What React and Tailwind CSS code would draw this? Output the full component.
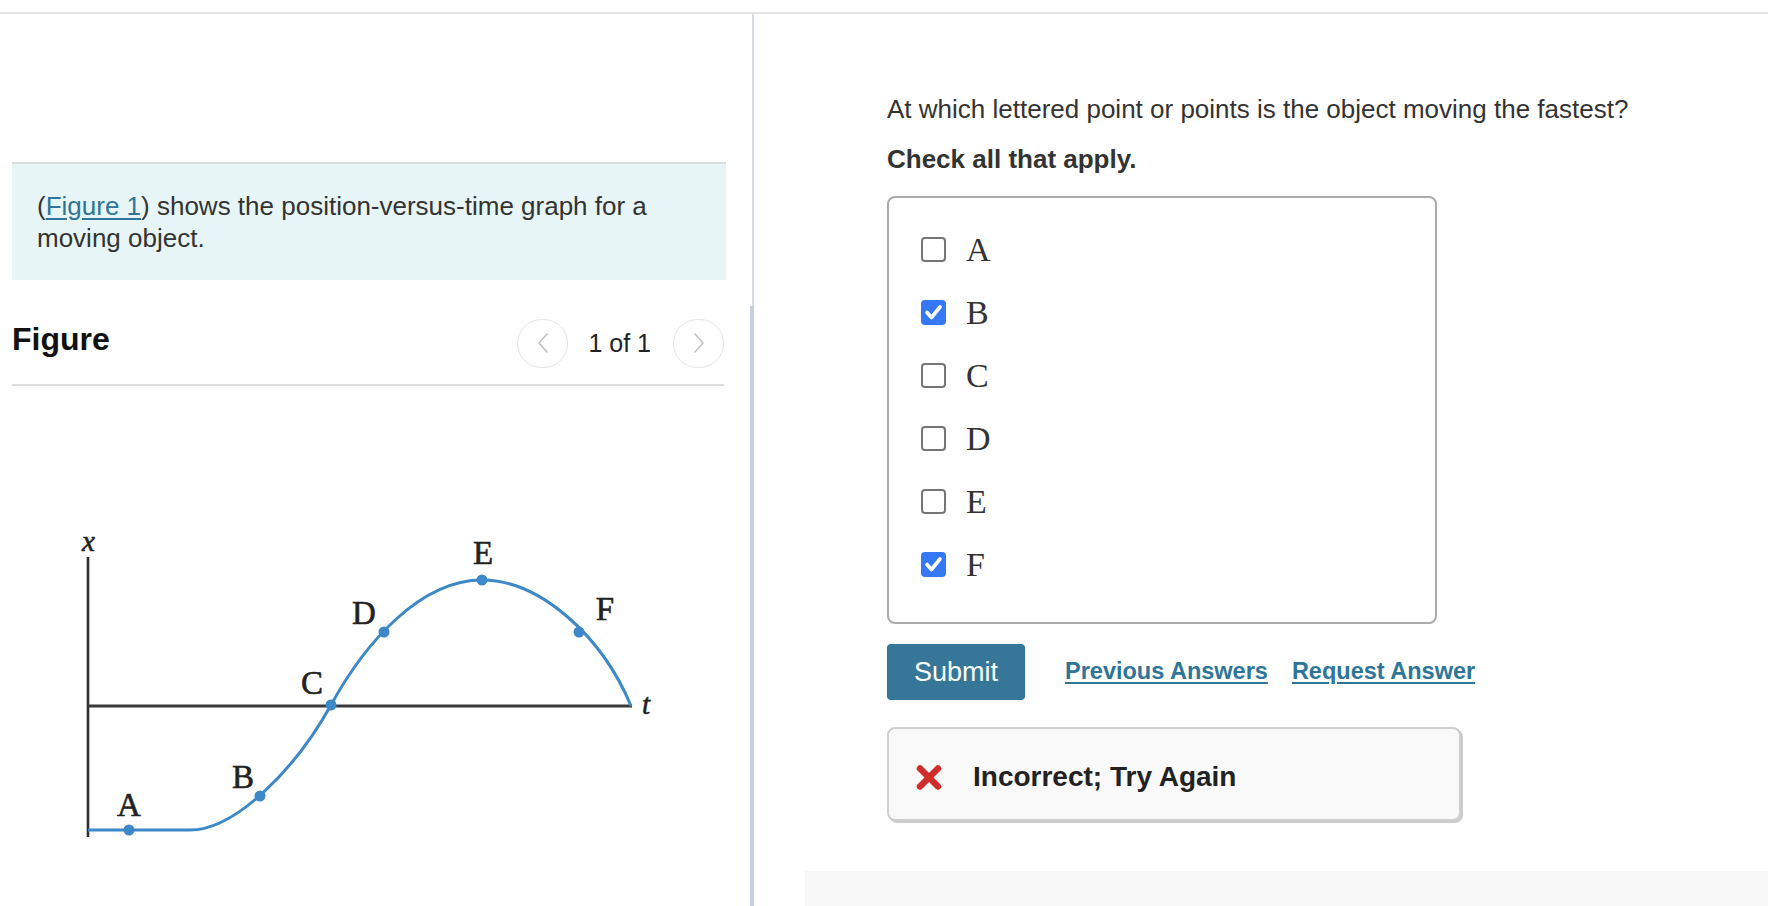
import React from "react";

function Chevron({ dir }) {
  return (
    <svg width="14" height="24" viewBox="0 0 14 24" fill="none">
      {dir === "left" ? (
        <polyline points="11,3 3,12 11,21" stroke="#c2c2c2" strokeWidth="1.6" strokeLinecap="round" strokeLinejoin="round" />
      ) : (
        <polyline points="3,3 11,12 3,21" stroke="#c2c2c2" strokeWidth="1.6" strokeLinecap="round" strokeLinejoin="round" />
      )}
    </svg>
  );
}

function Checkbox({ checked }) {
  if (checked) {
    return (
      <div className="w-[25px] h-[25px] rounded-[4px] bg-[#3478f6] flex items-center justify-center shrink-0">
        <svg width="25" height="25" viewBox="0 0 25 25" fill="none">
          <polyline points="6,12.5 10.5,17.5 19,7" stroke="#ffffff" strokeWidth="3.6" strokeLinecap="round" strokeLinejoin="round" />
        </svg>
      </div>
    );
  }
  return <div className="w-[25px] h-[25px] rounded-[4px] border-2 border-[#767676] bg-white shrink-0" />;
}

function Graph() {
  const serif = "'Liberation Serif', 'Times New Roman', serif";
  const blue = "#3d88c8";
  const pts = [
    [129, 830],
    [260, 796],
    [331, 705],
    [384, 632],
    [482, 580],
    [579, 632],
  ];
  return (
    <svg width="750" height="508" viewBox="0 386 750 508" className="block">
      <line x1="88" y1="557" x2="88" y2="837" stroke="#2f2f2f" strokeWidth="2.6" />
      <line x1="88" y1="706" x2="632" y2="706" stroke="#3a3a3a" strokeWidth="3" />
      <path
        d="M88,830 L190,830 C235,830 295,770 331,705 C365,643 420,580 482,580 C540,580 602,636 631,706"
        fill="none"
        stroke={blue}
        strokeWidth="3"
      />
      {pts.map(([x, y], i) => (
        <circle key={i} cx={x} cy={y} r="5.5" fill={blue} />
      ))}
      <text x="82" y="551" fontFamily={serif} fontStyle="italic" fontSize="29" fill="#222" stroke="#222" strokeWidth="0.6">x</text>
      <text x="642" y="714" fontFamily={serif} fontStyle="italic" fontSize="29" fill="#222" stroke="#222" strokeWidth="0.6">t</text>
      <g fontFamily={serif} fontSize="33" fill="#222" stroke="#222" strokeWidth="0.6" textAnchor="middle">
        <text x="129" y="816">A</text>
        <text x="243" y="788">B</text>
        <text x="312" y="694">C</text>
        <text x="364" y="624">D</text>
        <text x="483" y="564">E</text>
        <text x="605" y="620">F</text>
      </g>
    </svg>
  );
}

export default function App() {
  const options = [
    ["A", false],
    ["B", true],
    ["C", false],
    ["D", false],
    ["E", false],
    ["F", true],
  ];
  return (
    <div className="relative w-[1768px] h-[906px] overflow-hidden bg-white font-['Liberation_Sans',Arial,sans-serif] text-[#333]">
      <div className="h-[12px]" />
      <div className="flex h-[894px] border-t-2 border-[#e2e2e2]">
        {/* Left panel */}
        <div className="w-[750px] shrink-0 flex flex-col">
          <div className="mt-[148px] ml-[12px] w-[714px] h-[118px] border-t-2 border-[#dcdcdc] bg-[#e8f5f6] pt-[26px] px-[25px] text-[26px] leading-[32px] text-[#333]">
            <span>
              (<a className="text-[#2e7599] underline underline-offset-[3px]">Figure 1</a>) shows the position-versus-time graph for a moving object.
            </span>
          </div>
          <div className="mt-[38px] ml-[12px] w-[712px] h-[50px] flex items-center justify-between">
            <div className="text-[32px] font-bold text-[#111] leading-none mb-[8px]">Figure</div>
            <div className="flex items-center">
              <div className="w-[51px] h-[49px] rounded-full border-[1.5px] border-[#e4e4e4] flex items-center justify-center">
                <Chevron dir="left" />
              </div>
              <span className="ml-[20px] mr-[22px] text-[25px] leading-none text-[#222]">1 of 1</span>
              <div className="w-[51px] h-[49px] rounded-full border-[1.5px] border-[#e4e4e4] flex items-center justify-center">
                <Chevron dir="right" />
              </div>
            </div>
          </div>
          <div className="mt-[16px] ml-[12px] w-[712px] border-t-2 border-[#dedede]" />
          <Graph />
        </div>

        {/* Divider */}
        <div className="w-[4px] shrink-0 flex flex-col">
          <div className="h-[292px] w-[2px] ml-[2px] bg-[#d5dce6]" />
          <div className="flex-1 bg-[#c3cfdd]" />
        </div>

        {/* Right panel */}
        <div className="flex-1 flex flex-col">
          <div className="pl-[133px] pt-[79px]">
            <p className="text-[26px] leading-[32px] text-[#333]">
              At which lettered point or points is the object moving the fastest?
            </p>
            <p className="mt-[18px] text-[26px] leading-[32px] font-bold text-[#333]">Check all that apply.</p>
            <div className="mt-[21px] w-[550px] h-[428px] border-2 border-[#ababab] rounded-[8px] pt-[20px] pl-[32px]">
              {options.map(([label, checked]) => (
                <div key={label} className="h-[63px] flex items-center">
                  <Checkbox checked={checked} />
                  <span className="ml-[20px] font-['Liberation_Serif','Times_New_Roman',serif] text-[34px] leading-none text-[#333]">
                    {label}
                  </span>
                </div>
              ))}
            </div>
            <div className="mt-[20px] h-[56px] flex items-center">
              <button className="w-[138px] h-[56px] rounded-[4px] bg-[#367799] text-white text-[27px] leading-none">
                Submit
              </button>
              <a className="ml-[40px] text-[23.5px] font-bold text-[#2e7599] underline underline-offset-[3px]">Previous Answers</a>
              <a className="ml-[24px] text-[23.5px] font-bold text-[#2e7599] underline underline-offset-[3px]">Request Answer</a>
            </div>
            <div className="mt-[27px] w-[574px] h-[94px] rounded-[8px] border-2 border-[#cfcfcf] bg-[#f9f9f9] shadow-[2px_2px_0_#cccccc] flex items-center pl-[26px] pt-[6px]">
              <svg width="28" height="27" viewBox="0 0 28 27" fill="none">
                <line x1="5" y1="4.5" x2="23" y2="22.5" stroke="#d12c2c" strokeWidth="6.5" strokeLinecap="round" />
                <line x1="23" y1="4.5" x2="5" y2="22.5" stroke="#d12c2c" strokeWidth="6.5" strokeLinecap="round" />
              </svg>
              <span className="ml-[30px] text-[28px] font-bold text-[#222]">Incorrect; Try Again</span>
            </div>
          </div>
          <div className="mt-[50px] ml-[51px] flex-1 bg-[#f8f8f8]" />
        </div>
      </div>
    </div>
  );
}
